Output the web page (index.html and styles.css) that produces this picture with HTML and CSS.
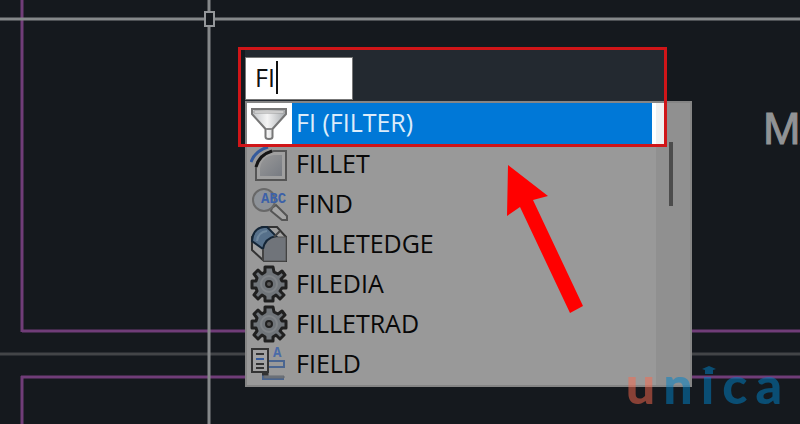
FILE: index.html
```html
<!DOCTYPE html>
<html lang="en">
<head>
  <meta charset="UTF-8" />
  <meta name="viewport" content="width=device-width, initial-scale=1" />
  <title>Command input - FILTER</title>
  <link rel="stylesheet" href="styles.css">
</head>
<body>
  <main class="canvas">

    <!-- Drawing lines and crosshair -->
    <svg class="drawing" aria-hidden="true">
      <g stroke="#703d78" stroke-width="3">
        <path d="M22 0V332M22 376V424" />
        <line x1="22" y1="331" x2="100%" y2="331" />
        <line x1="21" y1="377" x2="100%" y2="377" />
      </g>
      <line x1="0" y1="354" x2="100%" y2="354" stroke="#434548" stroke-width="3" />
      <g stroke="#85888a" stroke-width="3">
        <line x1="0" y1="19" x2="100%" y2="19" />
        <line x1="209" y1="0" x2="209" y2="100%" />
      </g>
      <rect x="205" y="12" width="9" height="14" fill="#15191e" stroke="#94979a" stroke-width="2" />
    </svg>

    <span class="drawing-text">MA</span>

    <!-- Dynamic input with suggestions -->
    <section class="command">
      <div class="command-bar">
        <input class="command-input" type="text" value="FI" aria-label="Command">
        <span class="caret"></span>
      </div>
      <div class="suggestions">
        <ul class="suggestion-list">
          <li>
            <button class="suggestion active" type="button">
              <span class="icon">
                <svg viewBox="0 0 38 38">
                  <defs>
                    <linearGradient id="metal">
                      <stop offset="0" stop-color="#c2c5c8" />
                      <stop offset=".45" stop-color="#f4f4f4" />
                      <stop offset="1" stop-color="#a6aaae" />
                    </linearGradient>
                  </defs>
                  <path d="M2 4H36V9L22.500 24V32Q22.500 34 19 34T15.500 32V24L2 9Z" fill="url(#metal)" stroke="#777" stroke-width="2" />
                  <path d="M4 6H34V8H4Z" fill="#fff" stroke="#999" />
                  <path d="M16 24H22" stroke="#888" stroke-width="2" />
                </svg>
              </span>
              <span class="name">FI (FILTER)</span>
            </button>
          </li>
          <li>
            <button class="suggestion" type="button">
              <span class="icon">
                <svg viewBox="0 0 38 38">
                  <defs>
                    <linearGradient id="face" x2="1" y2="1">
                      <stop offset="0" stop-color="#999" />
                      <stop offset="1" stop-color="#777b82" />
                    </linearGradient>
                  </defs>
                  <path d="M6 35V23Q8 8 24 6H36V35Z" fill="#a0a0a0" stroke="#555" stroke-width="2" />
                  <path d="M10 31V23Q12 11 24 10H32V31Z" fill="url(#face)" />
                  <path d="M6 22Q9 10 22 6" fill="none" stroke="#151515" stroke-width="3" />
                  <path d="M1 17Q5 6 18 2" fill="none" stroke="#355b9c" stroke-width="3" />
                </svg>
              </span>
              <span class="name">FILLET</span>
            </button>
          </li>
          <li>
            <button class="suggestion" type="button">
              <span class="icon">
                <svg viewBox="0 0 38 38">
                  <path d="M22 23L26 20L37 31V35H32L21 26Z" fill="#a5a5a5" stroke="#555" stroke-width="2" />
                  <circle cx="14" cy="15" r="11" fill="#8d9298" stroke="#686868" stroke-width="2" />
                  <text x="11" y="18" class="icon-abc">ABC</text>
                </svg>
              </span>
              <span class="name">FIND</span>
            </button>
          </li>
          <li>
            <button class="suggestion" type="button">
              <span class="icon">
                <svg viewBox="0 0 38 38">
                  <path d="M12 2H27L36 12V36H14L2 25V12Z" fill="#a1a1a1" stroke="#333" stroke-width="2" />
                  <path d="M13 20Q16 13 24 12H36V36H13Z" fill="#70747a" stroke="#555" />
                  <path d="M2 16Q3 3 14 2H17L26 11Q15 13 13 24L2 16Z" fill="#56708a" stroke="#142536" stroke-width="2" />
                  <path d="M13 24V36M24 12L30 6" stroke="#444" stroke-width="2" />
                  <path d="M7 16Q8 7 17 6" fill="none" stroke="#6f889e" stroke-width="2" />
                </svg>
              </span>
              <span class="name">FILLETEDGE</span>
            </button>
          </li>
          <li>
            <button class="suggestion" type="button">
              <span class="icon">
                <svg viewBox="0 0 38 38">
                  <defs>
                    <path id="gear" d="M15 2H23L24 7L28 9L32 6L35 10L31 14L32 16H36V23H32L30 26L34 30L30 34L26 30L23 32V36H15V32L12 30L8 34L4 30L7 26L6 23H2V16H6L7 13L4 9L8 5L12 9L15 7Z" />
                  </defs>
                  <use href="#gear" fill="#70757a" stroke="#202020" stroke-width="3" stroke-linejoin="round" />
                  <circle cx="19" cy="19" r="8" fill="none" stroke="#7f8387" stroke-width="2" />
                  <circle cx="19" cy="19" r="3" fill="#555" stroke="#202020" stroke-width="2" />
                </svg>
              </span>
              <span class="name">FILEDIA</span>
            </button>
          </li>
          <li>
            <button class="suggestion" type="button">
              <span class="icon">
                <svg viewBox="0 0 38 38">
                  <use href="#gear" fill="#70757a" stroke="#202020" stroke-width="3" stroke-linejoin="round" />
                  <circle cx="19" cy="19" r="8" fill="none" stroke="#7f8387" stroke-width="2" />
                  <circle cx="19" cy="19" r="3" fill="#555" stroke="#202020" stroke-width="2" />
                </svg>
              </span>
              <span class="name">FILLETRAD</span>
            </button>
          </li>
          <li>
            <button class="suggestion" type="button">
              <span class="icon">
                <svg viewBox="0 0 38 38">
                  <path d="M18 16H34V22H18M13 27V34H34" fill="none" stroke="#4a6590" stroke-width="2" />
                  <path d="M14 31H34V33H14Z" fill="#74787e" stroke="#626870" />
                  <path d="M17 22V29H12" fill="none" stroke="#333" stroke-width="3" />
                  <path d="M2 4H18V27H2Z" fill="#a2a2a2" stroke="#333" stroke-width="2" />
                  <path d="M6 9H14M6 19H14M6 23H14" stroke="#333" stroke-width="2" />
                  <path d="M6 14H14" stroke="#355b9c" stroke-width="2" />
                  <text x="23" y="12" class="icon-letter">A</text>
                </svg>
              </span>
              <span class="name">FIELD</span>
            </button>
          </li>
        </ul>
        <div class="scrollbar"><div class="thumb"></div></div>
      </div>
    </section>

    <!-- Red highlight and arrow -->
    <div class="highlight"></div>
    <svg class="arrow" viewBox="0 0 78 150" aria-hidden="true">
      <path d="M2 0L42 31L27 35L77 141L64 148L14 42L1 51Z" fill="#f00" />
    </svg>

    <div class="watermark">
      <span class="warm">u</span>
      <span>n</span>
      <span class="cap-letter">ı
        <svg viewBox="0 0 14 8"><path d="M0 3L7 0L14 3L11 4V8H3V4Z" fill="currentColor" /></svg>
      </span>
      <span>c</span>
      <span>a</span>
    </div>
  </main>
</body>
</html>
```
FILE: styles.css
```css
:root {
  --bg: #15191e;
  --panel: #232930;
  --menu: #999;
  --blue: #0078d7;
  --red: #d01518;
}

* {
  box-sizing: border-box;
  margin: 0;
  padding: 0;
}
body {
  background: var(--bg);
  font-family: "Open Sans", "Noto Sans", sans-serif;
}

.canvas {
  position: relative;
  min-height: 100vh;
  overflow: hidden;
}
.drawing {
  position: absolute;
  inset: 0;
  width: 100%;
  height: 100%;
}
.drawing-text {
  position: absolute;
  left: 763px;
  top: 104px;
  color: #919395;
  font-family: "Liberation Sans", sans-serif;
  font-size: 45px;
  line-height: 50px;
  white-space: nowrap;
  -webkit-text-stroke: 1px #919395;
}

/* Command input */
.command {
  position: absolute;
  left: 245px;
  top: 50px;
  width: 447px;
}
.command-bar {
  display: flex;
  align-items: center;
  width: 420px;
  padding: 7px 0 1px;
  background: var(--panel);
}
.command-input {
  width: 108px;
  height: 43px;
  padding: 0 9px 4px;
  border: 1px solid #777;
  background: #fff;
  color: #111;
  font-family: inherit;
  font-size: 25px;
  outline: none;
}
.caret {
  position: absolute;
  left: 31px;
  top: 11px;
  width: 2px;
  height: 33px;
  background: #111;
}

/* Suggestions */
.suggestions {
  display: flex;
  border: 2px solid #858585;
  background: var(--menu);
}
.suggestion-list {
  flex: 1;
  padding-bottom: 1px;
  list-style: none;
}
.suggestion {
  display: flex;
  align-items: stretch;
  width: 100%;
  height: 40px;
  border: none;
  background: none;
  color: #080808;
  font-family: inherit;
  font-size: 25px;
  line-height: 38px;
  text-align: left;
  cursor: pointer;
  -webkit-text-stroke: 0;
}
.suggestion .icon {
  display: flex;
  align-items: center;
  width: 45px;
  padding-left: 3px;
}
.suggestion .icon svg {
  width: 38px;
  height: 38px;
}
.suggestion .name {
  flex: 1;
  padding-left: 4px;
}
.suggestion.active {
  height: 41px;
  border-right: 4px solid #fff;
  background: #fff;
  color: #dcecfa;
}
.suggestion.active .name {
  background: var(--blue);
}
.icon-abc {
  fill: #3c61a8;
  font: bold 14px "Liberation Mono", monospace;
}
.icon-letter {
  fill: #4a6ba8;
  font: bold 14px "Liberation Mono", monospace;
}

.scrollbar {
  width: 34px;
  padding: 39px 0 0 13px;
  background: linear-gradient(90deg, #f0f0f0 8px, #909090 8px) no-repeat top / 100% 41px, #909090;
}
.thumb {
  width: 4px;
  height: 64px;
  background: #4c4c4c;
}

/* Annotations */
.highlight {
  position: absolute;
  left: 238px;
  top: 47px;
  width: 429px;
  height: 100px;
  border: 3px solid var(--red);
}
.arrow {
  position: absolute;
  left: 506px;
  top: 165px;
  width: 78px;
}

.watermark {
  position: absolute;
  right: 18px;
  bottom: 14px;
  display: flex;
  gap: 8px;
  color: #0083c9;
  font-family: Lato, sans-serif;
  font-size: 52px;
  font-weight: 900;
  line-height: 52px;
  opacity: .5;
}
.watermark .warm {
  color: #fb6a4e;
}
.cap-letter {
  position: relative;
}
.cap-letter svg {
  position: absolute;
  left: 1px;
  top: 8px;
  width: 14px;
}
```
